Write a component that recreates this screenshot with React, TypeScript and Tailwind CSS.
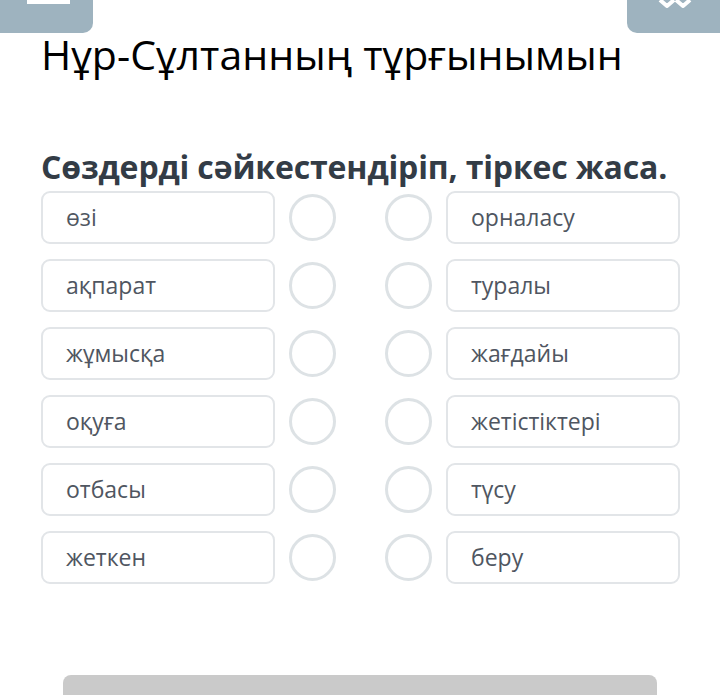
import React from "react";

const leftWords = ["өзі", "ақпарат", "жұмысқа", "оқуға", "отбасы", "жеткен"];
const rightWords = ["орналасу", "туралы", "жағдайы", "жетістіктері", "түсу", "беру"];

function WordBox({ text }: { text: string }) {
  return (
    <div className="w-[234px] h-[53px] rounded-[9px] border-2 border-[#e2e5e8] bg-white flex items-center pl-[23px] text-[23px] text-[#4f5661]">
      {text}
    </div>
  );
}

function Dot() {
  return <div className="w-[47px] h-[47px] rounded-full border-[3px] border-[#dde2e5] bg-white" />;
}

export default function App() {
  return (
    <div className="relative w-[720px] h-[695px] bg-white overflow-hidden font-['Open_Sans',sans-serif]">
      {/* top bar buttons */}
      <div className="flex justify-between">
        <div className="w-[93px] h-[33px] bg-[#9eb3bf] rounded-br-[10px] flex justify-center">
          <div className="w-[43px] h-[4px] bg-white ml-[3px]" />
        </div>
        <div className="w-[93px] h-[33px] bg-[#9eb3bf] rounded-bl-[10px] flex justify-center">
          <svg width="40" height="8" viewBox="0 0 40 8" className="ml-[2px]">
            <path d="M5 0 L12 6 L19 0 M21 0 L28 6 L35 0" stroke="white" strokeWidth="4" fill="none" strokeLinejoin="round" />
          </svg>
        </div>
      </div>

      <h1 className="ml-[41px] mt-[-2px] text-[41px] leading-[46px] text-black tracking-[0.05px]">
        Нұр-Сұлтанның тұрғынымын
      </h1>

      <h2 className="ml-[41px] mt-[69px] text-[32px] leading-[42px] font-bold text-[#333c46] tracking-[-0.15px]">
        Сөздерді сәйкестендіріп, тіркес жаса.
      </h2>

      <div className="ml-[41px] mt-[3px] flex flex-col gap-[15px]">
        {leftWords.map((w, i) => (
          <div key={i} className="flex items-center">
            <WordBox text={w} />
            <div className="ml-[14px]">
              <Dot />
            </div>
            <div className="ml-[49px]">
              <Dot />
            </div>
            <div className="ml-[14px]">
              <WordBox text={rightWords[i]} />
            </div>
          </div>
        ))}
      </div>

      <div className="absolute left-[63px] top-[675px] w-[594px] h-[30px] rounded-t-[8px] bg-[#cacaca]" />
    </div>
  );
}
